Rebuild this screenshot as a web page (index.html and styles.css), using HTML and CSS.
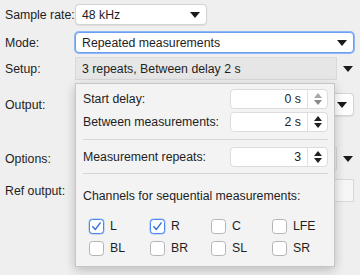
FILE: index.html
```html
<!DOCTYPE html>
<html>
<head>
<meta charset="utf-8">
<link rel="stylesheet" href="styles.css">
</head>
<body>
<div class="form">
  <div class="row row-rate">
    <span class="label">Sample rate:</span>
    <div class="combo combo-rate"><span class="val">48 kHz</span><span class="arrow"></span></div>
  </div>
  <div class="row row-mode">
    <span class="label">Mode:</span>
    <div class="combo combo-mode"><span class="val">Repeated measurements</span><span class="arrow"></span></div>
  </div>
  <div class="row row-setup">
    <span class="label">Setup:</span>
    <div class="setup"><div class="setup-box">3 repeats, Between delay 2 s</div><span class="arrow"></span></div>
  </div>
  <div class="row row-output">
    <span class="label">Output:</span>
    <div class="combo combo-output"><span class="val"></span><span class="arrow"></span></div>
  </div>
  <div class="row row-options">
    <span class="label">Options:</span>
    <div class="setup"><div class="setup-box flat"></div><span class="arrow"></span></div>
  </div>
  <div class="row row-ref">
    <span class="label">Ref output:</span>
    <div class="field"></div>
  </div>
</div>

<div class="popup">
  <div class="prow prow-first">
    <span class="plabel">Start delay:</span>
    <div class="spin"><span class="sval">0 s</span><span class="sbtn disabled"><span class="up"></span><span class="down"></span></span></div>
  </div>
  <div class="prow prow-second">
    <span class="plabel">Between measurements:</span>
    <div class="spin"><span class="sval">2 s</span><span class="sbtn"><span class="up"></span><span class="down"></span></span></div>
  </div>
  <div class="sep sep-a"></div>
  <div class="prow">
    <span class="plabel">Measurement repeats:</span>
    <div class="spin"><span class="sval">3</span><span class="sbtn"><span class="up"></span><span class="down"></span></span></div>
  </div>
  <div class="sep sep-b"></div>
  <div class="ptitle">Channels for sequential measurements:</div>
  <div class="channels">
    <label class="ch"><span class="box checked"><svg viewBox="0 0 16 16" width="13" height="13"><path d="M3.5 8.2 L6.6 11.6 L12.6 3.6" fill="none" stroke="#2f6fe0" stroke-width="1.8" stroke-linecap="round" stroke-linejoin="round"/></svg></span>L</label>
    <label class="ch"><span class="box checked"><svg viewBox="0 0 16 16" width="13" height="13"><path d="M3.5 8.2 L6.6 11.6 L12.6 3.6" fill="none" stroke="#2f6fe0" stroke-width="1.8" stroke-linecap="round" stroke-linejoin="round"/></svg></span>R</label>
    <label class="ch"><span class="box"></span>C</label>
    <label class="ch"><span class="box"></span>LFE</label>
    <label class="ch"><span class="box"></span>BL</label>
    <label class="ch"><span class="box"></span>BR</label>
    <label class="ch"><span class="box"></span>SL</label>
    <label class="ch"><span class="box"></span>SR</label>
  </div>
</div>
</body>
</html>
```

FILE: styles.css
```css
html, body {
  margin: 0;
  padding: 0;
}
body {
  width: 360px;
  height: 275px;
  overflow: hidden;
  background: #efefef;
  font-family: "Liberation Sans", Arial, sans-serif;
  font-size: 12.3px;
  color: #1e1e1e;
  position: relative;
}
.form {
  display: flex;
  flex-direction: column;
  padding: 4px 6px 0 5px;
}
.row {
  display: flex;
  align-items: center;
}
.label {
  width: 70px;
  flex: none;
  white-space: nowrap;
}
.row-mode { margin-top: 7px; }
.row-setup { margin-top: 4px; }
.row-output { margin-top: 13px; }
.row-options { margin-top: 31px; }
.row-ref { margin-top: 9px; }

.combo {
  height: 21px;
  box-sizing: border-box;
  background: #fff;
  border: 1px solid #d4d4d4;
  border-radius: 4px;
  display: flex;
  align-items: center;
  padding: 0 6px 0 6px;
  box-shadow: 0 0.5px 1px rgba(0,0,0,0.08);
}
.combo .val { flex: 1; white-space: nowrap; }
.combo-rate { width: 132px; }
.combo-mode {
  flex: 1;
  border: 1px solid #6d9ff0;
  box-shadow: 0 0 0 1px #8fb6f5;
}
.combo-output { flex: 1; height: 23px; }
.arrow {
  width: 0;
  height: 0;
  border-left: 5px solid transparent;
  border-right: 5px solid transparent;
  border-top: 6px solid #1b1b1b;
  flex: none;
}
.setup {
  flex: 1;
  display: flex;
  align-items: center;
}
.setup-box {
  width: 262px;
  height: 23px;
  box-sizing: border-box;
  background: #e6e6e6;
  border: 1px solid #d9d9d9;
  display: flex;
  align-items: center;
  padding-left: 6px;
  white-space: nowrap;
}
.setup-box.flat {
  background: #ececec;
}
.setup .arrow { margin-left: 6px; }
.field {
  flex: 1;
  height: 23px;
  box-sizing: border-box;
  border: 1px solid #d8d8d8;
  background: #f6f6f6;
}

.popup {
  position: absolute;
  left: 75px;
  top: 83px;
  width: 260px;
  height: 184px;
  box-sizing: border-box;
  background: #f3f3f3;
  border: 1px solid #c6c6c6;
  box-shadow: 0 3px 10px rgba(0,0,0,0.22);
  padding: 5px 6px 0 6px;
  display: flex;
  flex-direction: column;
}
.prow {
  display: flex;
  align-items: center;
  justify-content: space-between;
  padding-left: 1px;
}
.prow-second { margin-top: 3px; }
.spin {
  width: 98px;
  height: 20px;
  box-sizing: border-box;
  background: #fff;
  border: 1px solid #dcdcdc;
  border-radius: 4px;
  display: flex;
  align-items: stretch;
}
.sval {
  flex: 1;
  text-align: right;
  padding-right: 6px;
  line-height: 18px;
}
.sbtn {
  width: 19px;
  border-left: 1px solid #e0e0e0;
  display: flex;
  flex-direction: column;
  align-items: center;
  justify-content: center;
  gap: 2px;
}
.sbtn .up {
  width: 0; height: 0;
  border-left: 4px solid transparent;
  border-right: 4px solid transparent;
  border-bottom: 5px solid #222;
}
.sbtn .down {
  width: 0; height: 0;
  border-left: 4px solid transparent;
  border-right: 4px solid transparent;
  border-top: 5px solid #222;
}
.sbtn.disabled .up { border-bottom-color: #a8a8a8; }
.sbtn.disabled .down { border-top-color: #8a8a8a; }
.sep {
  height: 1px;
  background: #d6d6d6;
  margin: 7px 0 7px 1px;
}
.sep-b { margin-top: 6px; margin-bottom: 0; }
.ptitle {
  margin-top: 15px;
  padding-left: 1px;
}
.channels {
  margin-top: 12px;
  padding-left: 7px;
  display: grid;
  grid-template-columns: repeat(4, 61px);
  grid-auto-rows: 22px;
}
.ch {
  display: flex;
  align-items: center;
  gap: 6px;
}
.box {
  width: 15px;
  height: 15px;
  box-sizing: border-box;
  border: 1px solid #b4b4b4;
  border-radius: 3.5px;
  background: #fff;
  display: flex;
  align-items: center;
  justify-content: center;
}
.box.checked {
  border: 1.5px solid #4a85ee;
  box-shadow: 0 0 0 0.5px #9cbdf4;
}
```
